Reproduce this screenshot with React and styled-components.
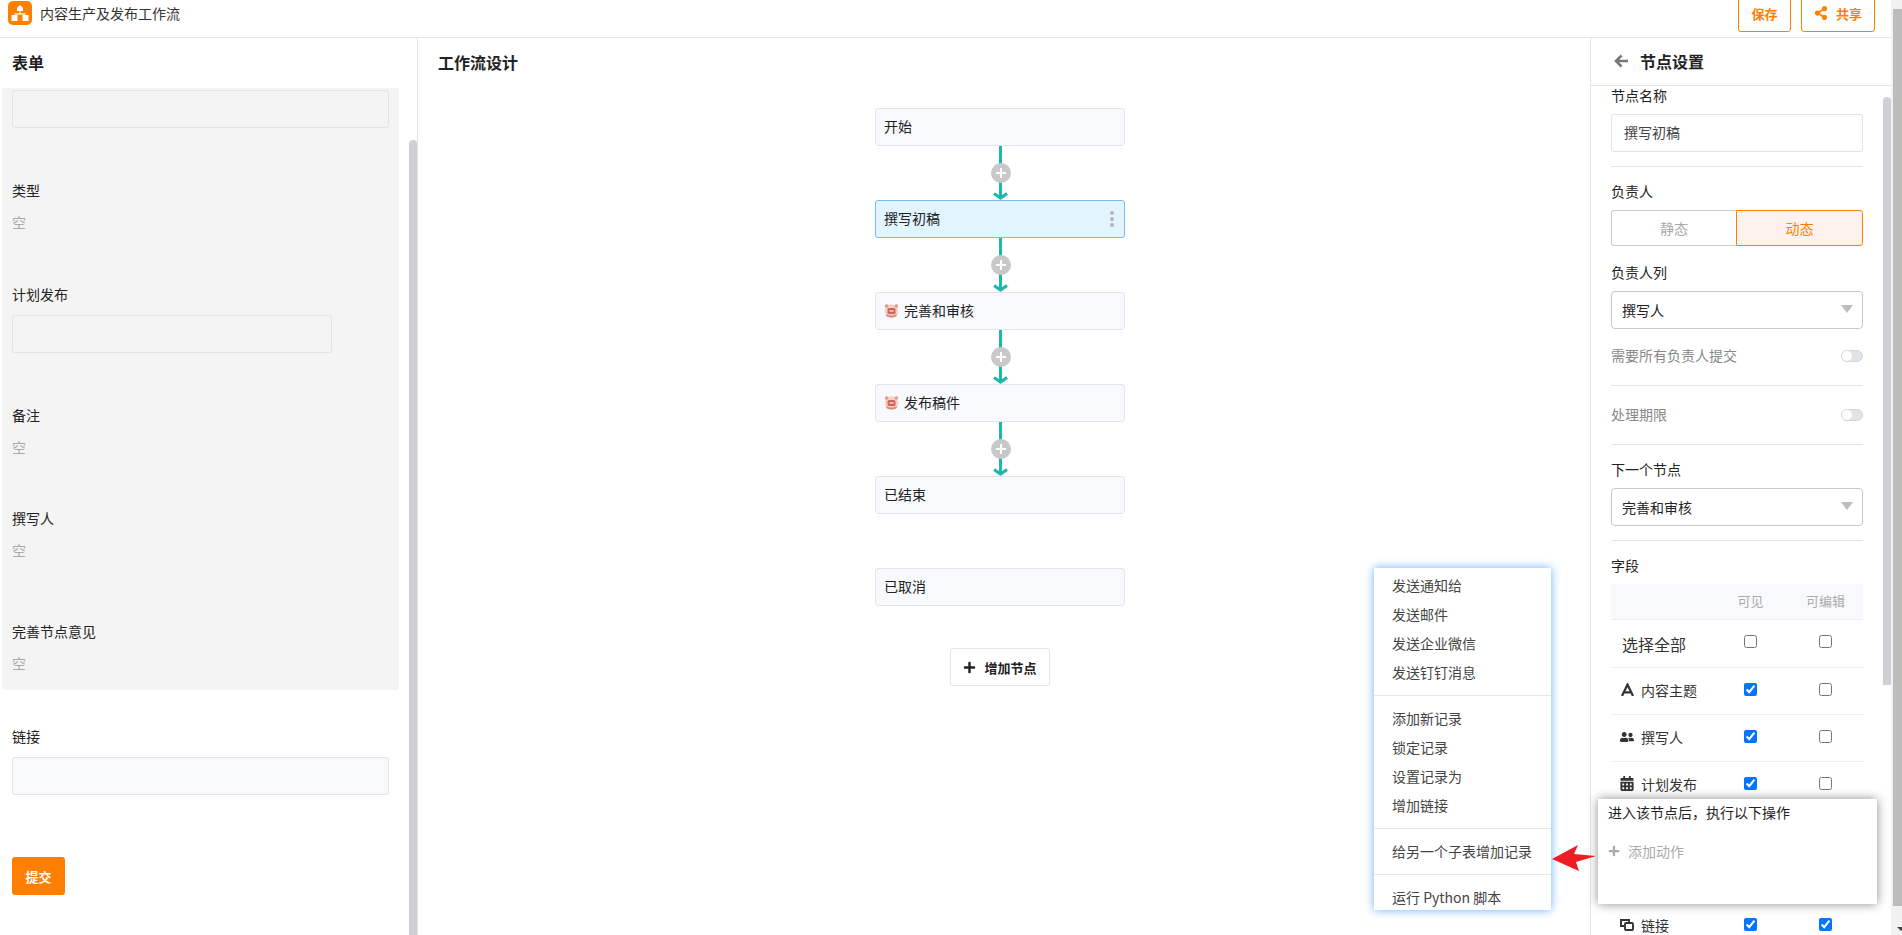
import React from "react";
import styled, { createGlobalStyle } from "styled-components";
import { FaShareAlt, FaUserFriends, FaCalendarAlt, FaPlus } from "react-icons/fa";

const Global = createGlobalStyle`
  html, body { margin: 0; padding: 0; height: 100%; overflow: hidden; background: #fff; }
  body { font-family: "Noto Sans CJK SC", "Noto Sans", sans-serif; font-size: 14px; color: #222; }
  * { box-sizing: border-box; }
`;

const Page = styled.div`
  position: relative;
  display: flex;
  width: 1902px;
  height: 935px;
  overflow: hidden;
`;
const Main = styled.div`
  flex: 1;
  min-width: 0;
  display: flex;
  flex-direction: column;
`;
const PageTrack = styled.div`
  position: relative;
  width: 11px;
  background: #f1f1f1;
  padding: 9px 0 29px 2px;
`;
const PageThumb = styled.div`
  height: 100%;
  background: #bcbcbc;
`;
const PageArrow = styled.div`
  position: absolute;
  left: 6px;
  bottom: 4px;
  width: 0;
  height: 0;
  border-left: 4px solid transparent;
  border-right: 4px solid transparent;
  border-top: 4px solid #444;
`;

const TopBar = styled.header`
  height: 38px;
  flex: none;
  display: flex;
  align-items: flex-start;
  padding: 1px 16px 0 8px;
  border-bottom: 1px solid #e6e6e6;
  overflow: hidden;
`;
const Logo = styled.div`
  width: 24px;
  height: 24px;
  border-radius: 5px;
  background: #ff8000;
  display: flex;
  align-items: center;
  justify-content: center;
`;
const AppTitle = styled.div`
  margin-left: 8px;
  font-size: 14px;
  line-height: 24px;
  color: #333;
  flex: 1;
`;
const OutlineButton = styled.button`
  margin: -7px 0 0 ${(p) => p.$gap || 0}px;
  height: 38px;
  width: ${(p) => p.$w}px;
  border: 1px solid #ff8000;
  border-radius: 3px;
  background: #fff;
  color: #ff8000;
  font: bold 13px "Noto Sans CJK SC", sans-serif;
  display: flex;
  align-items: center;
  justify-content: center;
  gap: 8px;
  padding: 0;
`;

const Body = styled.div`
  flex: 1;
  min-height: 0;
  display: flex;
`;
const FormPanel = styled.aside`
  position: relative;
  width: 418px;
  flex: none;
  border-right: 1px solid #e2e2e2;
  overflow: hidden;
`;
const PanelHeading = styled.h2`
  margin: 0;
  height: 50px;
  line-height: 48px;
  font-size: 16px;
  font-weight: 700;
  color: #222;
  padding-left: ${(p) => p.$pad}px;
`;
const PanelScrollbar = styled.div`
  position: absolute;
  right: 0;
  top: ${(p) => p.$top}px;
  width: 8px;
  height: ${(p) => p.$h}px;
  background: #cfcfd5;
  border-radius: 4px 4px 0 0;
`;
const GrayBox = styled.section`
  width: 397px;
  margin-left: 2px;
  height: 602px;
  padding: 2px 10px 0;
  background: #f4f4f4;
  border-radius: 0 0 4px 4px;
`;
const FormPlain = styled.section`
  width: 397px;
  margin-left: 2px;
  padding: 0 10px;
`;
const FormLabel = styled.div`
  margin-top: ${(p) => p.$top}px;
  height: 20px;
  line-height: 18px;
  font-size: 14px;
  color: #222;
`;
const EmptyValue = styled.div`
  margin-top: 11px;
  height: 20px;
  line-height: 20px;
  font-size: 14px;
  color: #aaa;
`;
const FormInput = styled.div`
  height: 38px;
  width: ${(p) => p.$w || 377}px;
  margin-top: ${(p) => p.$top || 0}px;
  border: 1px solid #dfe3ea;
  border-radius: 3px;
  background: ${(p) => p.$bg || "#f4f4f4"};
`;
const SubmitButton = styled.button`
  display: block;
  margin-top: 62px;
  width: 53px;
  height: 38px;
  padding: 0;
  border: none;
  border-radius: 3px;
  background: #ff8000;
  color: #fff;
  font: bold 13px "Noto Sans CJK SC", sans-serif;
`;

const FlowPanel = styled.main`
  flex: 1;
  min-width: 0;
`;
const FlowStack = styled.div`
  display: flex;
  flex-direction: column;
  align-items: center;
  padding: 20px 8px 0 0;
`;
const Node = styled.div`
  width: 250px;
  height: 38px;
  flex: none;
  display: flex;
  align-items: center;
  padding: 0 8px 2px;
  font-size: 14px;
  color: #222;
  border-radius: 3px;
  border: 1px solid ${(p) => (p.$active ? "#74bdee" : "#e3e5ec")};
  background: ${(p) => (p.$active ? "#e2f4fe" : "#f8f9fd")};
`;
const NodeName = styled.span`
  flex: 1;
`;
const Kebab = styled.div`
  display: flex;
  flex-direction: column;
  gap: 2px;
  margin: 2px 2px 0 0;
`;
const KebabDot = styled.i`
  width: 4px;
  height: 4px;
  border-radius: 50%;
  background: #b5b5b5;
`;
const Gap = styled.div`
  height: 54px;
  flex: none;
`;
const AddNode = styled.button`
  margin-top: 42px;
  width: 100px;
  height: 38px;
  padding: 0;
  display: flex;
  align-items: center;
  justify-content: center;
  gap: 8px;
  background: #fff;
  border: 1px solid #e3e5ec;
  border-radius: 3px;
  color: #222;
  font: bold 13px "Noto Sans CJK SC", sans-serif;
`;

const SettingsPanel = styled.aside`
  position: relative;
  width: 301px;
  flex: none;
  border-left: 1px solid #e2e2e2;
  display: flex;
  flex-direction: column;
  overflow: hidden;
`;
const SettingsHeader = styled.div`
  height: 48px;
  flex: none;
  display: flex;
  align-items: center;
  gap: 12px;
  padding: 0 0 2px 23px;
  border-bottom: 1px solid #e2e2e2;
  font-size: 16px;
  font-weight: 700;
  color: #222;
`;
const SettingsBody = styled.div`
  flex: 1;
  min-height: 0;
  padding: 0 28px 0 20px;
`;
const SetLabel = styled.div`
  height: 20px;
  line-height: 18px;
  margin-top: ${(p) => p.$top || 0}px;
  margin-bottom: 8px;
  color: #222;
`;
const NameInput = styled.div`
  height: 38px;
  border: 1px solid #dfe3ea;
  border-radius: 3px;
  padding-left: 12px;
  line-height: 34px;
  color: #444;
`;
const Divider = styled.hr`
  margin: ${(p) => p.$before}px 0 ${(p) => p.$after}px;
  border: none;
  border-top: 1px solid #e4e4e4;
`;
const Segments = styled.div`
  display: flex;
  height: 36px;
`;
const Segment = styled.div`
  flex: ${(p) => (p.$on ? "1" : "0 0 125px")};
  display: flex;
  align-items: center;
  justify-content: center;
  border: 1px solid ${(p) => (p.$on ? "#ff8000" : "#ccc")};
  border-right-width: ${(p) => (p.$on ? 1 : 0)}px;
  border-radius: ${(p) => (p.$on ? "0 3px 3px 0" : "3px 0 0 3px")};
  background: ${(p) => (p.$on ? "#fdf3ec" : "#fff")};
  color: ${(p) => (p.$on ? "#ff8000" : "#aaa")};
`;
const Select = styled.div`
  height: 38px;
  display: flex;
  align-items: center;
  justify-content: space-between;
  padding: 0 9px 0 10px;
  border: 1px solid #c8c8c8;
  border-radius: 4px;
  color: #222;
`;
const Caret = styled.i`
  width: 0;
  height: 0;
  margin-top: -3px;
  border-left: 6px solid transparent;
  border-right: 6px solid transparent;
  border-top: 8px solid #bdbdbd;
`;
const SwitchRow = styled.div`
  display: flex;
  align-items: center;
  justify-content: space-between;
  height: 20px;
  padding-bottom: 2px;
  margin-top: ${(p) => p.$top || 0}px;
  color: #888;
`;
const Toggle = styled.div`
  width: 22px;
  height: 12px;
  margin-top: 2px;
  border-radius: 6px;
  background: #e0e3e8;
  border: 1px solid #d3d6dc;
  display: flex;
  align-items: center;
`;
const Knob = styled.i`
  width: 10px;
  height: 10px;
  border-radius: 50%;
  background: #fff;
`;
const TableRow = styled.div`
  display: grid;
  grid-template-columns: 1fr 75px 75px;
  align-items: center;
  height: ${(p) => (p.$head ? 36 : p.$all ? 48 : 47)}px;
  border-bottom: 1px solid #eee;
  background: ${(p) => (p.$head ? "#f8f9fd" : "transparent")};
  color: ${(p) => (p.$head ? "#aaa" : "#333")};
  font-size: ${(p) => (p.$head ? 13 : 14)}px;
`;
const NameCell = styled.div`
  display: flex;
  align-items: center;
  gap: 7px;
  padding-left: ${(p) => (p.$all ? 11 : 9)}px;
  font-size: ${(p) => (p.$all ? 16 : 14)}px;
  color: #333;
  margin-bottom: ${(p) => (p.$all ? 0 : 2)}px;
`;
const IconBox = styled.span`
  width: 14px;
  flex: none;
  display: inline-flex;
  justify-content: center;
  color: #333;
  font-size: 15px;
  margin-top: -1px;
`;
const CheckCell = styled.div`
  display: flex;
  justify-content: center;
  margin-bottom: ${(p) => (p.$head ? 3 : 4)}px;
  text-align: center;
`;
const Check = styled.input`
  margin: 0;
  width: 13px;
  height: 13px;
`;

const ActionPopup = styled.div`
  position: absolute;
  left: 1598px;
  top: 799px;
  width: 279px;
  height: 105px;
  background: #fff;
  padding: 3px 10px;
  box-shadow: 0 0 10px rgba(0, 0, 0, 0.45);
`;
const PopupText = styled.div`
  height: 20px;
  line-height: 20px;
  color: #222;
`;
const AddAction = styled.div`
  display: flex;
  align-items: center;
  gap: 8px;
  margin-top: 19px;
  height: 20px;
  color: #aaa;
  font-size: 14px;
`;
const ActionMenu = styled.div`
  position: absolute;
  left: 1374px;
  top: 568px;
  width: 177px;
  height: 342px;
  padding-top: 3px;
  background: #fff;
  overflow: hidden;
  box-shadow: 0 0 9px #6aaeff;
`;
const MenuItem = styled.div`
  height: 29px;
  line-height: 29px;
  padding-left: 18px;
  color: #444;
  white-space: nowrap;
`;
const MenuDivider = styled.hr`
  margin: 8px 0 8px;
  border: none;
  border-top: 1px solid #e8e8e8;
`;
const RedArrow = styled.svg`
  position: absolute;
  left: 1552px;
  top: 845px;
`;

const FlowLink = () => (
  <svg width="30" height="54" viewBox="0 0 30 54" style={{ flex: "none" }}>
    <line x1="15.5" y1="0" x2="15.5" y2="52" stroke="#1cb9a8" strokeWidth="3" />
    <polyline points="9,47.5 15.5,52 22,47.5" fill="none" stroke="#1cb9a8" strokeWidth="3.2" />
    <circle cx="16" cy="27" r="10" fill="#c8c8c8" />
    <path d="M16 22v10M11 27h10" stroke="#fff" strokeWidth="2" />
  </svg>
);

const Avatar = () => (
  <svg width="15" height="15" viewBox="0 0 15 15" style={{ flex: "none", marginRight: 5 }}>
    <circle cx="7.5" cy="8" r="6.8" fill="#efd3c8" />
    <circle cx="2.6" cy="3" r="1.8" fill="#e29a88" />
    <circle cx="12.4" cy="3" r="1.8" fill="#e29a88" />
    <rect x="3.5" y="5" width="8" height="6" rx="1.5" fill="#d4645a" />
    <rect x="5.5" y="7" width="4" height="2" fill="#ecb9aa" />
    <path d="M2.5 12c2 2 8 2 10 0" fill="none" stroke="#dc8a78" strokeWidth="1.8" />
  </svg>
);

const LogoMark = () => (
  <svg width="18" height="17" viewBox="0 0 18 17" fill="#fff">
    <path d="M9 0l3 3v3H6V3z" />
    <rect x="8.4" y="6" width="1.2" height="3" />
    <rect x="3.4" y="8.4" width="11.2" height="1.2" />
    <rect x="0.5" y="10" width="6" height="6" />
    <rect x="11.5" y="10" width="6" height="6" />
  </svg>
);

const BackArrow = () => (
  <svg width="14" height="14" viewBox="0 0 14 14" fill="none" stroke="#777" strokeWidth="2.6">
    <path d="M14 7H2.5M7.5 1.5L2 7l5.5 5.5" />
  </svg>
);

const LetterIcon = () => (
  <svg width="13" height="13" viewBox="0 0 13 13" fill="none" stroke="#333" strokeWidth="2.2">
    <path d="M1 13L6.5 1.5 12 13M3 9.3h7" />
  </svg>
);

const LinkIcon = () => (
  <svg width="14" height="12" viewBox="0 0 14 12" fill="none" stroke="#333" strokeWidth="1.9">
    <path d="M9 3.5V1H1v6h3" />
    <rect x="5" y="4" width="8" height="7" rx="1" />
  </svg>
);

const fields = [
  { name: "内容主题", icon: <LetterIcon />, see: true },
  { name: "撰写人", icon: <FaUserFriends size={16} />, see: true },
  { name: "计划发布", icon: <FaCalendarAlt />, see: true },
  { name: "类型", icon: <LetterIcon />, see: true },
  { name: "备注", icon: <LetterIcon />, see: true },
  { name: "链接", icon: <LinkIcon />, see: true, edit: true },
];

const menuGroups = [
  ["发送通知给", "发送邮件", "发送企业微信", "发送钉钉消息"],
  ["添加新记录", "锁定记录", "设置记录为", "增加链接"],
  ["给另一个子表增加记录"],
  ["运行 Python 脚本"],
];

export default function App() {
  return (
    <Page>
      <Global />
      <Main>
        <TopBar>
          <Logo><LogoMark /></Logo>
          <AppTitle>内容生产及发布工作流</AppTitle>
          <OutlineButton $w={53}>保存</OutlineButton>
          <OutlineButton $w={74} $gap={10}><FaShareAlt size={14} />共享</OutlineButton>
        </TopBar>
        <Body>
          <FormPanel>
            <PanelHeading $pad={12}>表单</PanelHeading>
            <GrayBox>
              <FormInput />
              <FormLabel $top={53}>类型</FormLabel>
              <EmptyValue>空</EmptyValue>
              <FormLabel $top={53}>计划发布</FormLabel>
              <FormInput $w={320} $top={10} />
              <FormLabel $top={53}>备注</FormLabel>
              <EmptyValue>空</EmptyValue>
              <FormLabel $top={52}>撰写人</FormLabel>
              <EmptyValue>空</EmptyValue>
              <FormLabel $top={62}>完善节点意见</FormLabel>
              <EmptyValue>空</EmptyValue>
            </GrayBox>
            <FormPlain>
              <FormLabel $top={37}>链接</FormLabel>
              <FormInput $top={10} $bg="#f8f9fb" />
              <SubmitButton>提交</SubmitButton>
            </FormPlain>
            <PanelScrollbar $top={102} $h={800} />
          </FormPanel>

          <FlowPanel>
            <PanelHeading $pad={20}>工作流设计</PanelHeading>
            <FlowStack>
              <Node><NodeName>开始</NodeName></Node>
              <FlowLink />
              <Node $active>
                <NodeName>撰写初稿</NodeName>
                <Kebab><KebabDot /><KebabDot /><KebabDot /></Kebab>
              </Node>
              <FlowLink />
              <Node><Avatar /><NodeName>完善和审核</NodeName></Node>
              <FlowLink />
              <Node><Avatar /><NodeName>发布稿件</NodeName></Node>
              <FlowLink />
              <Node><NodeName>已结束</NodeName></Node>
              <Gap />
              <Node><NodeName>已取消</NodeName></Node>
              <AddNode><FaPlus size={13} />增加节点</AddNode>
            </FlowStack>
          </FlowPanel>

          <SettingsPanel>
            <SettingsHeader><BackArrow />节点设置</SettingsHeader>
            <SettingsBody>
              <SetLabel>节点名称</SetLabel>
              <NameInput>撰写初稿</NameInput>
              <Divider $before={14} $after={15} />
              <SetLabel>负责人</SetLabel>
              <Segments>
                <Segment>静态</Segment>
                <Segment $on>动态</Segment>
              </Segments>
              <SetLabel $top={17}>负责人列</SetLabel>
              <Select>撰写人<Caret /></Select>
              <SwitchRow $top={17}>需要所有负责人提交<Toggle><Knob /></Toggle></SwitchRow>
              <Divider $before={19} $after={19} />
              <SwitchRow>处理期限<Toggle><Knob /></Toggle></SwitchRow>
              <Divider $before={19} $after={15} />
              <SetLabel>下一个节点</SetLabel>
              <Select>完善和审核<Caret /></Select>
              <Divider $before={14} $after={15} />
              <SetLabel>字段</SetLabel>
              <TableRow $head>
                <span />
                <CheckCell $head>可见</CheckCell>
                <CheckCell $head>可编辑</CheckCell>
              </TableRow>
              <TableRow $all>
                <NameCell $all>选择全部</NameCell>
                <CheckCell><Check type="checkbox" readOnly /></CheckCell>
                <CheckCell><Check type="checkbox" readOnly /></CheckCell>
              </TableRow>
              {fields.map((f) => (
                <TableRow key={f.name}>
                  <NameCell><IconBox>{f.icon}</IconBox>{f.name}</NameCell>
                  <CheckCell><Check type="checkbox" readOnly checked={!!f.see} /></CheckCell>
                  <CheckCell><Check type="checkbox" readOnly checked={!!f.edit} /></CheckCell>
                </TableRow>
              ))}
            </SettingsBody>
            <PanelScrollbar $top={59} $h={588} />
          </SettingsPanel>
        </Body>
      </Main>
      <PageTrack>
        <PageThumb />
        <PageArrow />
      </PageTrack>

      <ActionMenu>
        {menuGroups.map((g, i) => (
          <React.Fragment key={i}>
            {i > 0 && <MenuDivider />}
            {g.map((m) => <MenuItem key={m}>{m}</MenuItem>)}
          </React.Fragment>
        ))}
      </ActionMenu>
      <RedArrow width="44" height="28" viewBox="0 0 44 28">
        <path d="M0 14 L26 0 L22 9 L44 11 L24 17 L27 26 Z" fill="#ee1c25" />
      </RedArrow>
      <ActionPopup>
        <PopupText>进入该节点后，执行以下操作</PopupText>
        <AddAction><FaPlus size={12} />添加动作</AddAction>
      </ActionPopup>
    </Page>
  );
}
